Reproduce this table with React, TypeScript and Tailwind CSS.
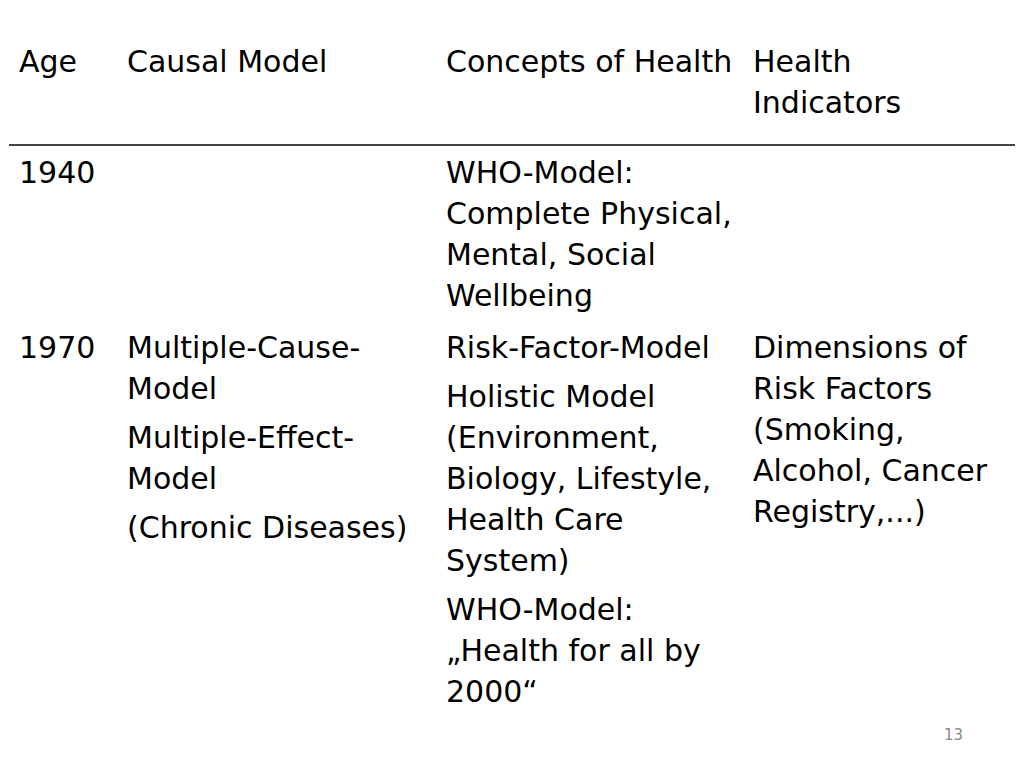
export default function App() {
  const font = { fontFamily: '"DejaVu Sans", sans-serif' };
  return (
    <div className="relative w-[1024px] h-[768px] bg-white text-black overflow-hidden" style={font}>
      <div className="pt-[41px] text-[30px] leading-[41px]">
        <div className="grid grid-cols-[108px_319px_307px_1fr] pl-[19px] h-[103px] whitespace-nowrap">
          <div>Age</div>
          <div>Causal Model</div>
          <div>Concepts of Health</div>
          <div>Health<br />Indicators</div>
        </div>
        <div className="mx-[9px] h-[2px] bg-[#444]" />
        <div className="grid grid-cols-[108px_319px_307px_1fr] pl-[19px] pt-[6px] whitespace-nowrap">
          <div>1940</div>
          <div />
          <div>WHO-Model:<br />Complete Physical,<br />Mental, Social<br />Wellbeing</div>
          <div />
        </div>
        <div className="grid grid-cols-[108px_319px_307px_1fr] pl-[19px] pt-[11px] whitespace-nowrap">
          <div>1970</div>
          <div className="flex flex-col gap-[8px]">
            <div>Multiple-Cause-<br />Model</div>
            <div>Multiple-Effect-<br />Model</div>
            <div>(Chronic Diseases)</div>
          </div>
          <div className="flex flex-col gap-[8px]">
            <div>Risk-Factor-Model</div>
            <div>Holistic Model<br />(Environment,<br />Biology, Lifestyle,<br />Health Care<br />System)</div>
            <div>WHO-Model:<br />„Health for all by<br />2000“</div>
          </div>
          <div>Dimensions of<br />Risk Factors<br />(Smoking,<br />Alcohol, Cancer<br />Registry,...)</div>
        </div>
      </div>
      <div className="absolute left-[944px] top-[724px] text-[15px] text-[#8a8a8a]">13</div>
    </div>
  );
}
